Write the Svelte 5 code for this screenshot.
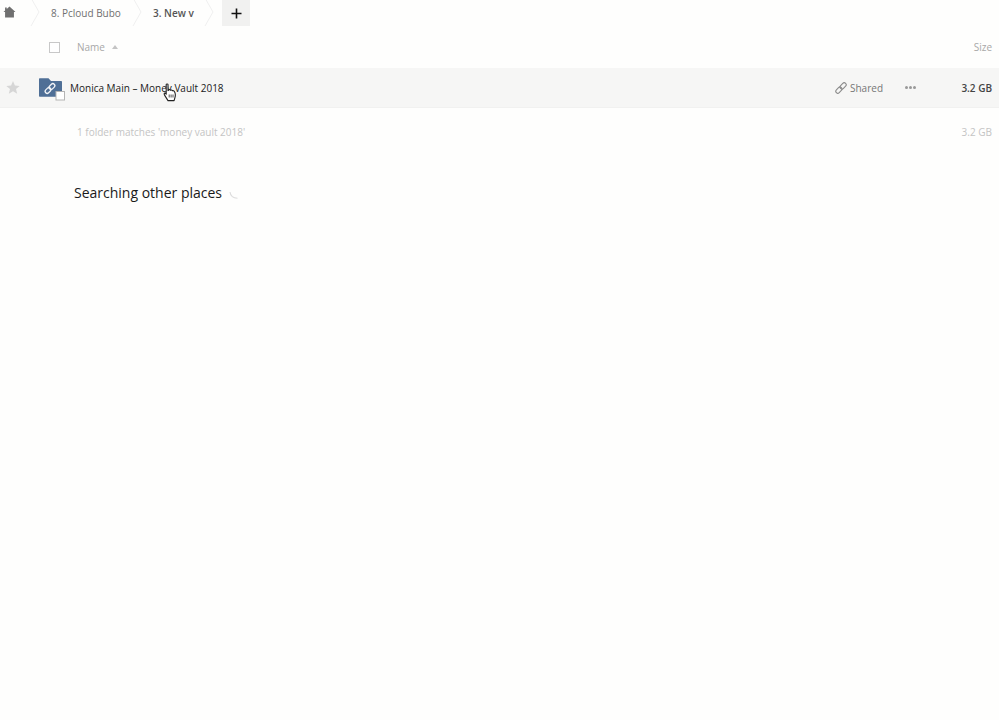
<script>
  const crumbs = [
    { label: '8. Pcloud Bubo', cls: 'muted' },
    { label: '3. New v', cls: 'current' }
  ];
</script>

<div class="page">
  <nav class="crumbs">
    <span class="home">
      <svg width="13" height="12" viewBox="0 0 14 13"><path d="M7 0.5 13.5 6.5H11.8V12.5H2.2V6.5H0.5L2.2 4.9V1.5H4V3.3Z" fill="#707070"/></svg>
    </span>
    <svg class="chev first" width="10" height="28" viewBox="0 0 10 28"><path d="M1 0 9 14 1 28" fill="none" stroke="#efefef"/></svg>
    {#each crumbs as c}
      <span class="crumb {c.cls}">{c.label}</span>
      <svg class="chev" width="10" height="28" viewBox="0 0 10 28"><path d="M1 0 9 14 1 28" fill="none" stroke="#efefef"/></svg>
    {/each}
    <button class="add" aria-label="New">
      <svg width="11" height="11" viewBox="0 0 11 11"><path d="M5.5 0.5V10.5M0.5 5.5H10.5" stroke="#111" stroke-width="1.6"/></svg>
    </button>
  </nav>

  <div class="head">
    <span class="check"></span>
    <span class="name-head">Name</span>
    <svg class="sort" width="6" height="4" viewBox="0 0 6 4"><path d="M3 0 6 4H0Z" fill="#c4c4c4"/></svg>
    <span class="size-head">Size</span>
  </div>

  <div class="row">
    <svg class="star" width="14" height="13" viewBox="0 0 14 13"><path d="M7 0 8.9 4.5 13.7 4.9 10 8 11.2 12.8 7 10.2 2.8 12.8 4 8 .3 4.9 5.1 4.5Z" fill="#d6d6d6"/></svg>
    <span class="folder">
      <svg width="27" height="23" viewBox="0 0 27 23">
        <path d="M0 1C0 .6.3.3.7.3H9.5L12 3H22.2C22.6 3 23 3.3 23 3.8V18C23 18.4 22.6 18.7 22.2 18.7H.7C.3 18.7 0 18.4 0 18Z" fill="#4f6f96"/>
        <g fill="none" stroke="#f2f4f7" stroke-width="1.3" transform="rotate(-45 11 10.5)">
          <rect x="5" y="8.5" width="6.5" height="4" rx="2"/>
          <rect x="10.5" y="8.5" width="6.5" height="4" rx="2"/>
        </g>
        <rect x="17" y="13.5" width="8.5" height="8.5" fill="#fff" stroke="#b4b4b4"/>
      </svg>
    </span>
    <span class="file-name">Monica Main – Money Vault 2018</span>
    <span class="shared">
      <svg width="12" height="12" viewBox="0 0 12 12"><g fill="none" stroke="#8a8a8a" stroke-width="1.1" transform="rotate(-45 6 6)"><rect x="-.5" y="4" width="7" height="4" rx="2"/><rect x="5.5" y="4" width="7" height="4" rx="2"/></g></svg>
      Shared
    </span>
    <span class="dots"><i></i><i></i><i></i></span>
    <span class="size">3.2 GB</span>
    <svg class="cursor" width="14" height="19" viewBox="0 0 14 19">
      <path d="M3.2 1.6C3.2.7 5 .7 5 1.6V7.6L5.6 7.2C6 6.3 7.3 6.4 7.5 7.3 8 6.7 9.2 6.9 9.4 7.8 9.9 7.4 11.2 7.6 11.4 8.6 12.4 9.6 12.6 12.8 12 14.4L11.1 17.6H5L1.7 12.4C.9 11 1 9.9 2 10L3.2 11.2Z" fill="#fff" stroke="#222" stroke-width="1.1" stroke-linejoin="round"/>
      <path d="M6.2 11.5V14.5M8.1 11.5V14.5M10 11.5V14.5" stroke="#222" stroke-width=".8"/>
    </svg>
  </div>

  <div class="summary">
    <span>1 folder matches 'money vault 2018'</span>
    <span>3.2 GB</span>
  </div>

  <div class="other">
    <h2>Searching other places</h2>
    <svg class="spin" width="10" height="10" viewBox="0 0 10 10"><path d="M1 1C1.4 4.4 4 7 8.5 7.2" fill="none" stroke="#dcdcdc" stroke-width="1.1"/></svg>
  </div>
</div>

<style>
  :global(body) { margin: 0; background: #fefefd; }
  .page {
    width: 999px;
    height: 720px;
    overflow: hidden;
    background: #fefefd;
    font-family: "Open Sans", "Liberation Sans", sans-serif;
    font-size: 10px;
    color: #222;
  }
  .crumbs { display: flex; align-items: center; height: 26px; }
  .home { display: flex; width: 30px; padding: 0 0 2px 3px; box-sizing: border-box; }
  .chev { flex: none; margin-top: -2px; }
  .first { margin-right: 10px; }
  .crumb { white-space: nowrap; line-height: 24px; }
  .muted { width: 81px; margin-left: 1px; color: #707070; }
  .crumb.current { width: 51px; color: #555; font-weight: 600; margin-left: 2px; }
  .crumb + .chev { margin-right: 8px; }
  .crumb.muted + .chev { margin-right: 9px; }
  .add {
    display: flex; align-items: center; justify-content: center;
    width: 28px; height: 26px; margin: 0; padding: 0;
    border: 0; background: #f1f1f0;
  }
  .head {
    display: flex; align-items: center; height: 42px;
    color: #a8a8a8;
  }
  .check {
    width: 9px; height: 9px; margin: 1px 0 0 49px;
    border: 1px solid #c8c8c8; background: #fff;
  }
  .name-head { margin-left: 17px; }
  .sort { margin-left: 7px; }
  .size-head { margin-left: auto; margin-right: 7px; }
  .row {
    position: relative;
    display: flex; align-items: center; height: 39px;
    background: #f6f6f5; border-bottom: 1px solid #f1f1f0;
  }
  .star { margin-left: 6px; flex: none; }
  .folder { display: flex; margin-left: 19px; margin-top: 3px; width: 31px; }
  .file-name { color: #1b1b1b; }
  .shared {
    display: flex; align-items: center; gap: 3px;
    margin-left: auto; color: #777;
  }
  .dots { display: flex; gap: 1px; margin-left: 22px; }
  .dots i { width: 3px; height: 3px; border-radius: 50%; background: #999; }
  .size { width: 83px; text-align: right; padding-right: 7px; box-sizing: border-box; font-weight: 600; color: #444; }
  .cursor { position: absolute; left: 163px; top: 15px; }
  .summary {
    display: flex; justify-content: space-between;
    height: 47px; padding: 17px 7px 0 77px; box-sizing: border-box;
    color: #c4c4c4;
  }
  .other { display: flex; align-items: center; margin: 28px 0 0 74px; }
  h2 { margin: 0; font-size: 14px; font-weight: 400; line-height: 20px; color: #1a1a1a; }
  .spin { margin: 5px 0 0 7px; }
</style>
